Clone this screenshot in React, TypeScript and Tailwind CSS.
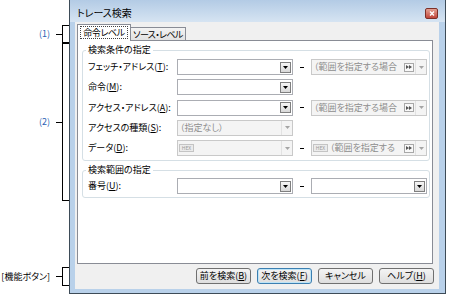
import React from "react";

function Arrow({ c = "#000" }: { c?: string }) {
  return (
    <svg width="5" height="3" viewBox="0 0 5 3">
      <path d="M0 0H5L2.5 3Z" fill={c} />
    </svg>
  );
}

function DropBtn() {
  return (
    <div className="flex h-[11px] w-[11px] items-center justify-center border border-[#7f7f7f] bg-linear-to-b from-[#f6f6f6] to-[#d8d8d8]">
      <Arrow />
    </div>
  );
}

function Combo() {
  return (
    <div className="flex h-4 w-[116px] shrink-0 items-center justify-end border border-[#abadb3] bg-white pr-[1px]">
      <DropBtn />
    </div>
  );
}

function SkipBtn() {
  return (
    <div className="mr-[1px] flex h-[9px] w-[10px] items-center justify-center border border-[#a8a8a8] bg-[#f8f8f8]">
      <svg width="6" height="4" viewBox="0 0 6 4">
        <path d="M0 0L3 2L0 4Z M3 0L6 2L3 4Z" fill="#555" />
      </svg>
    </div>
  );
}

function Hex() {
  return (
    <div className="mr-[2px] flex h-[8px] w-[15px] shrink-0 items-center justify-center border border-[#c4c4c4] bg-[#ebebeb] text-[5px] leading-[6px] text-[#9a9a9a]">
      HEX
    </div>
  );
}

function DisCombo({ children }: { children?: React.ReactNode }) {
  return (
    <div className="flex h-4 w-[116px] shrink-0 items-center border border-[#c9c9c9] bg-[#f4f4f4] text-[#8e8e8e]">
      <div className="flex min-w-0 flex-1 items-center overflow-hidden whitespace-nowrap pl-[1px]">
        {children}
      </div>
      <div className="flex h-full w-[11px] items-center justify-center border-l border-[#e2e2e2]">
        <Arrow c="#a5a5a5" />
      </div>
    </div>
  );
}

function Dash() {
  return (
    <div className="flex w-[18px] shrink-0 justify-center">
      <div className="h-px w-[4px] bg-black" />
    </div>
  );
}

function Row({ label, children }: { label: React.ReactNode; children: React.ReactNode }) {
  return (
    <div className="flex h-4 items-center">
      <span className="w-[89px] shrink-0 whitespace-nowrap">{label}</span>
      {children}
    </div>
  );
}

function Button({ children, focus }: { children: React.ReactNode; focus?: boolean }) {
  return (
    <div
      className={
        focus
          ? "flex h-4 w-[55px] items-center justify-center rounded-[3px] border border-[#3c7fb1] bg-linear-to-b from-[#f4f4f4] to-[#dedede] shadow-[inset_0_0_0_1px_#bde4f7]"
          : "flex h-4 w-[55px] items-center justify-center rounded-[3px] border border-[#707070] bg-linear-to-b from-[#f4f4f4] to-[#dedede]"
      }
    >
      {children}
    </div>
  );
}

function Window() {
  return (
    <div className="flex h-[294px] w-[377px] shrink-0 flex-col border-x border-b border-[#3d4b57] bg-[#b9d1ea]">
      {/* title bar */}
      <div className="flex h-[22px] shrink-0 items-center bg-linear-to-b from-[#b3cbe5] to-[#d6e4f2] px-[7px] pt-[4px]">
        <span className="flex-1 text-[10px] leading-[14px]">トレース検索</span>
        <div className="flex h-[11px] w-[13px] items-center justify-center rounded-[2px] border border-[#7d3028] bg-linear-to-b from-[#e3a093] to-[#c0443a]">
          <svg width="6" height="5" viewBox="0 0 6 5">
            <path d="M1 0.5L5 4.5M5 0.5L1 4.5" stroke="white" strokeWidth="1.4" />
          </svg>
        </div>
      </div>

      {/* client area */}
      <div className="ml-[5px] mr-[6px] flex h-[267px] w-[364px] flex-col bg-[#f0f0f0] pl-[2px] pr-[5px] pt-[2px]">
        <div className="relative z-10 flex h-[16px] items-end">
          <div className="-mb-px flex h-[17px] w-[54px] items-start justify-center border-x border-t border-[#898c95] bg-white pt-[2px]">
            <span className="px-[2px] leading-[11px] tracking-[-0.4px] outline-1 outline-dotted outline-[#444]">命令レベル</span>
          </div>
          <div className="flex h-[13px] w-[55px] items-center justify-center whitespace-nowrap border-r border-t border-[#898c95] bg-linear-to-b from-[#f3f3f3] to-[#e2e2e2] leading-[11px] tracking-[-0.6px]">
            ソース・レベル
          </div>
        </div>

        <div className="relative flex h-[224px] w-[356px] flex-col border border-[#898c95] bg-white px-[4px]">
          <fieldset className="mt-[3px] w-[348px] rounded-[3px] border border-[#d5dfe5] pb-[4px] pl-[5px] pr-[2px] pt-[3px]">
            <legend className="-ml-[2px] px-[2px]">検索条件の指定</legend>
            <div className="flex flex-col gap-[4.25px]">
              <Row label={<>フェッチ・アドレス(<u>T</u>):</>}>
                <Combo />
                <Dash />
                <DisCombo>
                  <span className="flex-1 pl-[1px]">（範囲を指定する場合</span>
                  <SkipBtn />
                </DisCombo>
              </Row>
              <Row label={<>命令(<u>M</u>):</>}>
                <Combo />
              </Row>
              <Row label={<>アクセス・アドレス(<u>A</u>):</>}>
                <Combo />
                <Dash />
                <DisCombo>
                  <span className="flex-1 pl-[1px]">（範囲を指定する場合</span>
                  <SkipBtn />
                </DisCombo>
              </Row>
              <Row label={<>アクセスの種類(<u>S</u>):</>}>
                <DisCombo>
                  <span className="pl-[1px]">（指定なし）</span>
                </DisCombo>
              </Row>
              <Row label={<>データ(<u>D</u>):</>}>
                <DisCombo>
                  <Hex />
                </DisCombo>
                <Dash />
                <DisCombo>
                  <Hex />
                  <span className="flex-1">（範囲を指定する</span>
                  <SkipBtn />
                </DisCombo>
              </Row>
            </div>
          </fieldset>

          <fieldset className="mt-[3px] w-[348px] rounded-[3px] border border-[#d5dfe5] pb-[3px] pl-[5px] pr-[2px] pt-[2px]">
            <legend className="-ml-[2px] px-[2px]">検索範囲の指定</legend>
            <Row label={<>番号(<u>U</u>):</>}>
              <Combo />
              <Dash />
              <Combo />
            </Row>
          </fieldset>
        </div>

        <div className="mt-[4px] flex justify-end gap-[6px]">
          <Button>前を検索(<u>B</u>)</Button>
          <Button focus>次を検索(<u>F</u>)</Button>
          <Button>キャンセル</Button>
          <Button>ヘルプ(<u>H</u>)</Button>
        </div>
      </div>
    </div>
  );
}

export default function App() {
  return (
    <div className="flex h-[298px] w-[474px] overflow-hidden bg-white font-['Noto_Sans_CJK_JP',sans-serif] text-[9px] leading-[12px] text-black [font-feature-settings:'palt']">
      {/* callouts */}
      <div className="flex w-[69px] shrink-0 flex-col">
        <div className="mt-[25px] flex h-[18px] items-center">
          <span className="w-[50px] text-right text-[#2b5fb4]">(1)</span>
          <span className="ml-[6px] h-px w-[6px] bg-black" />
          <span className="h-full w-[7px] border-y border-l border-black" />
        </div>
        <div className="flex h-[158px] items-center">
          <span className="w-[50px] text-right text-[#2b5fb4]">(2)</span>
          <span className="ml-[6px] h-px w-[6px] bg-black" />
          <span className="h-full w-[7px] border-y border-l border-black" />
        </div>
        <div className="mt-[66px] flex h-[19px] items-center">
          <span className="w-[50px] whitespace-nowrap text-right">[機能ボタン]</span>
          <span className="ml-[6px] h-px w-[6px] bg-black" />
          <span className="h-full w-[7px] border-y border-l border-black" />
        </div>
      </div>
      <Window />
    </div>
  );
}
